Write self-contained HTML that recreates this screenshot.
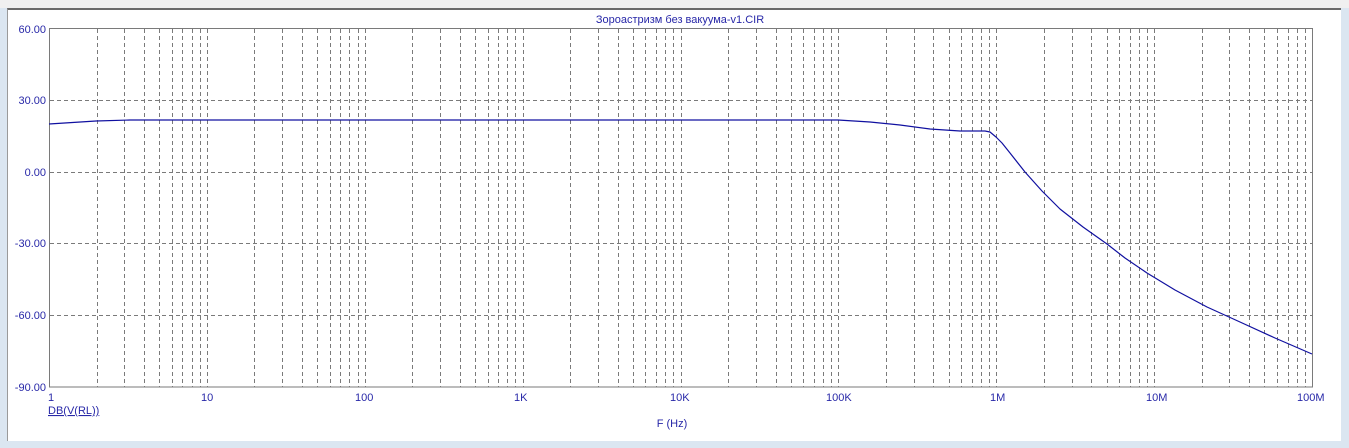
<!DOCTYPE html>
<html><head><meta charset="utf-8"><style>
html,body{margin:0;padding:0;width:1349px;height:448px;overflow:hidden;background:#dbe6f1;font-family:"Liberation Sans",sans-serif;}
#top{position:absolute;left:0;top:0;width:1349px;height:8px;background:#f0f0f0;}
#panel{position:absolute;left:7px;top:8px;width:1334px;height:433px;background:#fff;border-top:2px solid #6a6a6a;border-left:1px solid #9a9a9a;box-sizing:border-box;}
svg{position:absolute;left:0;top:0;}
text{font-family:"Liberation Sans","Noto Sans CJK SC",sans-serif;font-size:11px;fill:#2828a8;}
</style></head><body>
<div id="top"></div>
<div id="panel"></div>
<svg id="s" width="1349" height="448" xmlns="http://www.w3.org/2000/svg">
<g id="grid" stroke="#7a7a7a" stroke-width="1" stroke-dasharray="4,3" fill="none"></g>
<rect x="49.5" y="28.5" width="1263" height="358.5" fill="none" stroke="#7a7a7a"/>
<path d="M49,124 L96,121 L130,120 L838,120 L870,122 L900,125 L930,129 L960,131 L985,131 L990,132 L996,137 L1002,143 L1010,153 L1025,172 L1042,191 L1060,209 L1083,227 L1107,244 L1125,258 L1147,273 L1175,290 L1207,307 L1240,322 L1275,338 L1312,354" fill="none" stroke="#1010a0" stroke-width="1.2" stroke-linejoin="round"/>
<text x="680" y="23" text-anchor="middle">Зороастризм без вакуума-v1.CIR</text>
<g text-anchor="end">
<text x="46" y="33">60.00</text>
<text x="46" y="104">30.00</text>
<text x="46" y="176">0.00</text>
<text x="46" y="247">-30.00</text>
<text x="46" y="319">-60.00</text>
<text x="46" y="391">-90.00</text>
</g>
<g>
<text x="48" y="401">1</text>
<text x="201" y="401">10</text>
<text x="355" y="401">100</text>
<text x="514" y="401">1K</text>
<text x="670" y="401">10K</text>
<text x="826" y="401">100K</text>
<text x="990" y="401">1M</text>
<text x="1146" y="401">10M</text>
<text x="1297" y="401">100M</text>
</g>
<text x="48" y="414" text-decoration="underline">DB(V(RL))</text>
<text x="672" y="427" text-anchor="middle">F (Hz)</text>
</svg>
<script>
var g=document.getElementById('grid'),h='';
var x0=49,dec=157.875;
for(var d=0;d<8;d++){for(var k=2;k<=10;k++){var x=Math.round(x0+dec*(d+Math.log10(k)))+0.5;if(d==7&&k==10)continue;h+='<line x1="'+x+'" y1="29" x2="'+x+'" y2="387"/>';}}
[100,172,243,315].forEach(function(y){h+='<line x1="50" y1="'+(y+0.5)+'" x2="1312" y2="'+(y+0.5)+'"/>';});
g.innerHTML=h;
</script>
</body></html>
